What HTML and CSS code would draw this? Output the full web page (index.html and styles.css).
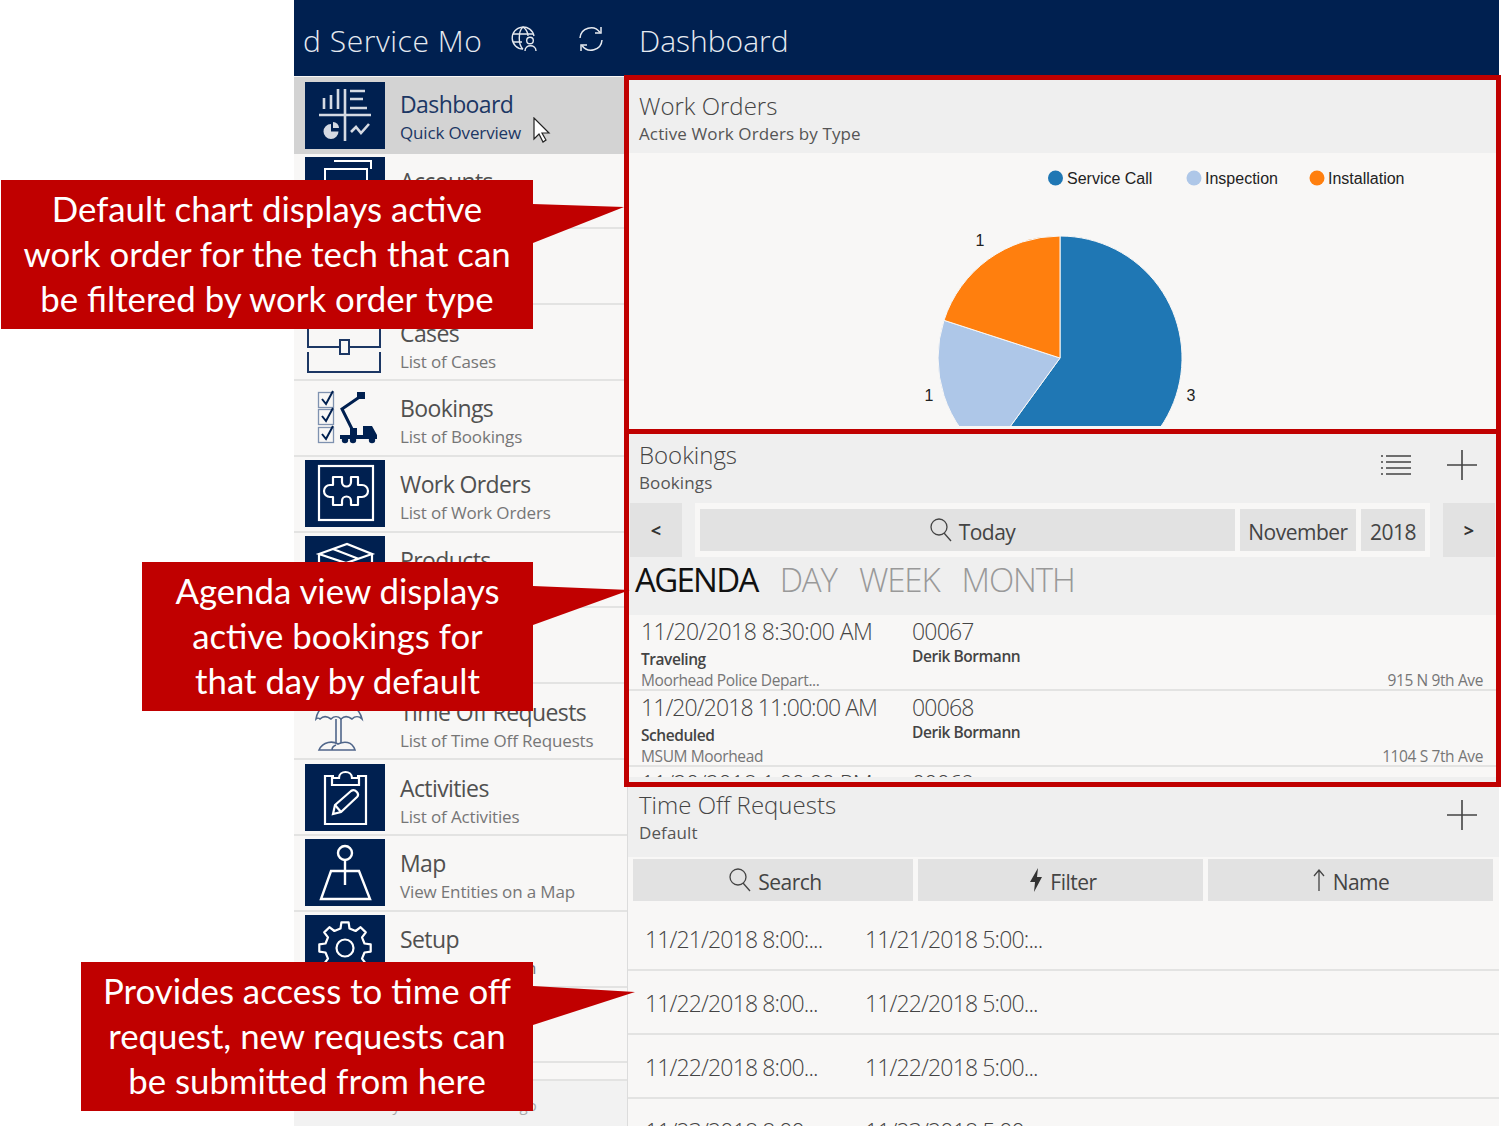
FILE: index.html
```html
<!DOCTYPE html>
<html lang="en">

<head>
    <meta charset="UTF-8">
    <meta name="viewport" content="width=device-width, initial-scale=1.0">
    <link rel="stylesheet" href="styles.css">
    <title>Field Service Mobile</title>
</head>

<body>

    <div class="app">

        <header class="topbar">
            <div class="app-name">d Service Mo</div>
            <svg class="top-icon globe" viewBox="0 0 28 28" fill="none" stroke="#e6eaf0" stroke-width="1.4">
                <path d="M13 24A11 11 0 1 1 24 11"/>
                <path d="M13 2C8 6 8 20 13 24M13 2C17 5 18 9 18 11"/>
                <path d="M3 9h20M3 17h9"/>
                <circle cx="20" cy="15.500" r="3.300"/>
                <path d="M15 26c0-7 11-7 11 0"/>
            </svg>
            <svg class="top-icon sync" viewBox="0 0 28 28" fill="none" stroke="#e6eaf0" stroke-width="1.5">
                <path d="M3 13A11 11 0 0 1 23 7.500"/>
                <path d="M24 2v6h-6"/>
                <path d="M25 15A11 11 0 0 1 5 20.500"/>
                <path d="M4 26v-6h6"/>
            </svg>
            <div class="page-title">Dashboard</div>
        </header>

        <div class="content">

            <nav class="sidebar">
                <a class="nav-row active">
                    <span class="tile">
                        <svg viewBox="0 0 80 67" fill="none" stroke="#d5dae3" stroke-width="2.600">
                            <path d="M14 33h52M40 7v52"/>
                            <path d="M19 27v-11M26 27v-14M33 27v-20"/>
                            <path d="M45 9h15M45 17h13M45 26h17"/>
                            <path d="M26 42a7.500 7.500 0 1 0 7.500 7.500h-7.500z" fill="#d5dae3" stroke="none"/>
                            <path d="M28 40a6 6 0 0 1 6 6h-6z" fill="#d5dae3" stroke="none"/>
                            <path d="M46 50l5-5 5 6 8-9"/>
                        </svg>
                    </span>
                    <span class="nav-text"><b>Dashboard</b><small>Quick Overview</small></span>
                </a>
                <a class="nav-row">
                    <span class="tile">
                        <svg viewBox="0 0 80 67" fill="none" stroke="#fff" stroke-width="2">
                            <path d="M20 12h42v42H20zM29 4h37v8"/>
                        </svg>
                    </span>
                    <span class="nav-text"><b>Accounts</b><small>List of Accounts</small></span>
                </a>
                <a class="nav-row">
                    <span class="tile"></span>
                    <span class="nav-text"><b>Contacts</b><small>List of Contacts</small></span>
                </a>
                <a class="nav-row">
                    <span class="tile plain">
                        <svg viewBox="0 0 80 67" fill="none" stroke="#1c3764" stroke-width="2">
                            <path d="M3 5v33h32M44 38h31V5"/>
                            <path d="M3 43v20h72V43"/>
                            <rect x="35" y="31" width="9" height="14"/>
                        </svg>
                    </span>
                    <span class="nav-text"><b>Cases</b><small>List of Cases</small></span>
                </a>
                <a class="nav-row">
                    <span class="tile plain">
                        <svg viewBox="0 0 80 67" fill="none" stroke="#002050" stroke-width="2">
                            <g stroke="#7f92b0" stroke-width="1.300">
                                <rect x="13.500" y="8.500" width="15" height="15"/>
                                <rect x="13.500" y="25.500" width="15" height="15"/>
                                <rect x="13.500" y="43.500" width="15" height="15"/>
                            </g>
                            <path d="M17 15l4 5 7-13M17 32l4 5 7-13M17 50l4 5 7-13"/>
                            <path d="M56 12L37 25l11 22" stroke-width="3"/>
                            <path d="M52 8h8v7h-8z" fill="#002050" stroke="none"/>
                            <path d="M45 44h7v8h-7zM35 51h23v-9h9l5 9v4H35z" fill="#002050" stroke="none"/>
                            <circle cx="40" cy="56" r="3.200" fill="#002050" stroke="none"/>
                            <circle cx="48" cy="56" r="3.200" fill="#002050" stroke="none"/>
                            <circle cx="67" cy="56" r="3.200" fill="#002050" stroke="none"/>
                        </svg>
                    </span>
                    <span class="nav-text"><b>Bookings</b><small>List of Bookings</small></span>
                </a>
                <a class="nav-row">
                    <span class="tile">
                        <svg viewBox="0 0 80 67" fill="none" stroke="#fff" stroke-width="2.200">
                            <rect x="14" y="6" width="54" height="54"/>
                            <path d="M28 17h9v5a4.500 4.500 0 0 0 9 0v-5h7v8h4a6 6 0 0 1 0 12h-4v8h-7v-4a4.500 4.500 0 0 0-9 0v4h-9v-8h-3a6 6 0 0 1 0-12h3z" stroke-linejoin="round"/>
                        </svg>
                    </span>
                    <span class="nav-text"><b>Work Orders</b><small>List of Work Orders</small></span>
                </a>
                <a class="nav-row">
                    <span class="tile">
                        <svg viewBox="0 0 80 67" fill="none" stroke="#fff" stroke-width="2.200">
                            <path d="M14 18L42 8l25 10-26 9zM14 18v28l27 12 26-12V18M41 27v31M28 13l26 10"/>
                        </svg>
                    </span>
                    <span class="nav-text"><b>Products</b><small>List of Products</small></span>
                </a>
                <a class="nav-row">
                    <span class="tile"></span>
                    <span class="nav-text"><b>Assets</b><small>List of Assets</small></span>
                </a>
                <a class="nav-row">
                    <span class="tile plain">
                        <svg viewBox="0 0 80 67" fill="none" stroke="#50668a" stroke-width="1.600">
                            <path d="M11 31C14 8 52 8 57 31c-3-3-7-3-10 0-4-3-8-3-11 0-3-3-7-3-10 0-4-3-8-3-11 0-1-1-3-1-4 0z"/>
                            <path d="M31 31v24M36 31v24"/>
                            <path d="M14 62c4-9 14-9 19-6 6-3 14-3 17 6zM27 62c0-2 1-4 4-5"/>
                        </svg>
                    </span>
                    <span class="nav-text"><b>Time Off Requests</b><small>List of Time Off Requests</small></span>
                </a>
                <a class="nav-row">
                    <span class="tile">
                        <svg viewBox="0 0 80 67" fill="none" stroke="#fff" stroke-width="2.200">
                            <path d="M29 12H20v48h41V12h-9"/>
                            <path d="M27 21v-7h7c0-8 13-8 13 0h7v7z"/>
                            <path d="M28 50l2-9 16-14c4-3 9 3 6 6L36 48z"/>
                            <path d="M30 41l6 7"/>
                        </svg>
                    </span>
                    <span class="nav-text"><b>Activities</b><small>List of Activities</small></span>
                </a>
                <a class="nav-row">
                    <span class="tile">
                        <svg viewBox="0 0 80 67" fill="none" stroke="#fff" stroke-width="2.400">
                            <circle cx="40" cy="14" r="7"/>
                            <path d="M40 21v25"/>
                            <path d="M26 32h28l11 28H16z"/>
                        </svg>
                    </span>
                    <span class="nav-text"><b>Map</b><small>View Entities on a Map</small></span>
                </a>
                <a class="nav-row">
                    <span class="tile">
                        <svg viewBox="0 0 80 67" fill="none" stroke="#fff" stroke-width="2.200">
                            <g transform="translate(40 33)">
                                <polygon points="-3.600,-25.700 3.600,-25.700 4.500,-19.500 10.600,-17 15.600,-20.800 20.800,-15.600 17,-10.600 19.500,-4.500 25.700,-3.600 25.700,3.600 19.500,4.500 17,10.600 20.800,15.600 15.600,20.800 10.600,17 4.500,19.500 3.600,25.700 -3.600,25.700 -4.500,19.500 -10.600,17 -15.600,20.800 -20.800,15.600 -17,10.600 -19.500,4.500 -25.700,3.600 -25.700,-3.600 -19.500,-4.500 -17,-10.600 -20.800,-15.600 -15.600,-20.800 -10.600,-17 -4.500,-19.500" stroke-linejoin="round"/>
                                <circle r="8.500"/>
                            </g>
                        </svg>
                    </span>
                    <span class="nav-text"><b>Setup</b><small>Setup Application</small></span>
                </a>
                <a class="nav-row"></a>
                <div class="nav-row short"></div>
                <div class="sync-note">Synced 5 minutes ago</div>
            </nav>

            <main class="main">

                <section class="panel work-orders">
                    <div class="panel-head">
                        <div>
                            <h2>Work Orders</h2>
                            <p>Active Work Orders by Type</p>
                        </div>
                    </div>
                    <svg class="chart" viewBox="628 153 871 277" width="871" height="277">
                        <circle cx="1055.500" cy="178" r="7.500" fill="#1f77b4"/>
                        <text x="1067" y="184" class="legend-label">Service Call</text>
                        <circle cx="1194" cy="178" r="7.500" fill="#aec7e8"/>
                        <text x="1205" y="184" class="legend-label">Inspection</text>
                        <circle cx="1317" cy="178" r="7.500" fill="#ff7f0e"/>
                        <text x="1328" y="184" class="legend-label">Installation</text>
                        <g stroke="#f8f7f6" stroke-width="1">
                            <path d="M1060 358V236A122 122 0 1 1 988.300 456.700z" fill="#1f77b4"/>
                            <path d="M1060 358L988.300 456.700A122 122 0 0 1 944 320.300z" fill="#aec7e8"/>
                            <path d="M1060 358L944 320.300A122 122 0 0 1 1060 236z" fill="#ff7f0e"/>
                        </g>
                        <rect x="628" y="426" width="871" height="4" fill="#f8f7f6"/>
                        <text x="980" y="246" class="pie-label" text-anchor="middle">1</text>
                        <text x="929" y="401" class="pie-label" text-anchor="middle">1</text>
                        <text x="1191" y="401" class="pie-label" text-anchor="middle">3</text>
                    </svg>
                </section>

                <section class="panel bookings">
                    <div class="panel-head">
                        <div>
                            <h2>Bookings</h2>
                            <p>Bookings</p>
                        </div>
                        <svg class="head-icon list-icon" viewBox="0 0 30 24" fill="none" stroke="#444" stroke-width="1.400">
                            <path d="M5 3h25M5 9h25M5 15h25M5 21h25"/>
                            <path d="M0 3h2M0 9h2M0 15h2M0 21h2"/>
                        </svg>
                        <svg class="head-icon plus-icon" viewBox="0 0 30 30" stroke="#444" stroke-width="1.600">
                            <path d="M15 0v30M0 15h30"/>
                        </svg>
                    </div>
                    <div class="cal-bar">
                        <button class="cal-arrow">&lt;</button>
                        <div class="cal-group">
                            <button class="btn today">
                                <svg class="btn-icon" viewBox="0 0 22 24" fill="none" stroke="#444" stroke-width="1.300">
                                    <circle cx="9" cy="9" r="8"/><path d="M14 15l7 8"/>
                                </svg>
                                Today
                            </button>
                            <button class="btn month">November</button>
                            <button class="btn year">2018</button>
                        </div>
                        <button class="cal-arrow">&gt;</button>
                    </div>
                    <div class="view-tabs">
                        <span class="current">AGENDA</span>
                        <span>DAY</span>
                        <span>WEEK</span>
                        <span>MONTH</span>
                    </div>
                    <div class="agenda">
                        <div class="agenda-row">
                            <div class="when">11/20/2018 8:30:00 AM</div>
                            <div class="num">00067</div>
                            <div class="status">Traveling</div>
                            <div class="tech">Derik Bormann</div>
                            <div class="place">Moorhead Police Depart...</div>
                            <div class="addr">915 N 9th Ave</div>
                        </div>
                        <div class="agenda-row">
                            <div class="when tight">11/20/2018 11:00:00 AM</div>
                            <div class="num">00068</div>
                            <div class="status">Scheduled</div>
                            <div class="tech">Derik Bormann</div>
                            <div class="place">MSUM Moorhead</div>
                            <div class="addr">1104 S 7th Ave</div>
                        </div>
                        <div class="agenda-row">
                            <div class="when">11/20/2018 1:00:00 PM</div>
                            <div class="num">00069</div>
                        </div>
                    </div>
                </section>

                <section class="panel time-off">
                    <div class="panel-head">
                        <div>
                            <h2>Time Off Requests</h2>
                            <p>Default</p>
                        </div>
                        <svg class="head-icon plus-icon" viewBox="0 0 30 30" stroke="#444" stroke-width="1.600">
                            <path d="M15 0v30M0 15h30"/>
                        </svg>
                    </div>
                    <div class="list-tools">
                        <button class="btn">
                            <svg class="btn-icon" viewBox="0 0 22 24" fill="none" stroke="#444" stroke-width="1.300">
                                <circle cx="9" cy="9" r="8"/><path d="M14 15l7 8"/>
                            </svg>
                            Search
                        </button>
                        <button class="btn">
                            <svg class="btn-icon bolt" viewBox="0 0 14 24" fill="#333">
                                <path d="M9 0L1 14h5l-1 10 8-15H8z"/>
                            </svg>
                            Filter
                        </button>
                        <button class="btn">
                            <svg class="btn-icon arrow" viewBox="0 0 14 24" fill="none" stroke="#444" stroke-width="1.300">
                                <path d="M7 23V2M2 8l5-6 5 6"/>
                            </svg>
                            Name
                        </button>
                    </div>
                    <div class="request-row"><span>11/21/2018 8:00:...</span><span>11/21/2018 5:00:...</span></div>
                    <div class="request-row"><span>11/22/2018 8:00...</span><span>11/22/2018 5:00...</span></div>
                    <div class="request-row"><span>11/22/2018 8:00...</span><span>11/22/2018 5:00...</span></div>
                    <div class="request-row"><span>11/23/2018 8:00...</span><span>11/23/2018 5:00...</span></div>
                </section>

            </main>
        </div>
    </div>

    <!-- overlays from the slide -->
    <div class="frame frame-one"></div>
    <div class="frame frame-two"></div>

    <svg class="cursor" viewBox="0 0 18 26">
        <path d="M1 1v21l5-5 4 8 3-2-4-7h7z" fill="#fff" stroke="#222" stroke-width="1.200"/>
    </svg>

    <div class="callout callout-one">
        Default chart displays active<br>work order for the tech that can<br>be filtered by work order type
        <svg class="tail" viewBox="0 0 91 149" width="91" height="149"><polygon points="0,24 91,27 0,63"/></svg>
    </div>
    <div class="callout callout-two">
        Agenda view displays<br>active bookings for<br>that day by default
        <svg class="tail" viewBox="0 0 97 149" width="97" height="149"><polygon points="0,24 97,28 0,63"/></svg>
    </div>
    <div class="callout callout-three">
        Provides access to time off<br>request, new requests can<br>be submitted from here
        <svg class="tail" viewBox="0 0 102 149" width="102" height="149"><polygon points="0,24 102,30 0,63"/></svg>
    </div>

</body>

</html>
```

FILE: styles.css
```css
* {
    box-sizing: border-box;
    margin: 0;
    padding: 0;
}

html {
    font-family: "Open Sans", "Noto Sans", sans-serif;
}

body {
    width: 1501px;
    height: 1126px;
    position: relative;
    overflow: hidden;
    background: #fff;
    color: #444;
}

.app {
    width: 1205px;
    height: 1126px;
    margin-left: 294px;
    display: flex;
    flex-direction: column;
    background: #f8f7f6;
}

/* top bar */

.topbar {
    height: 76px;
    flex: none;
    display: flex;
    align-items: center;
    padding-top: 4px;
    background: #002050;
    color: #e6eaf0;
    font-weight: 300;
    font-size: 30px;
}

.app-name {
    width: 179px;
    margin-left: 9px;
    letter-spacing: .55px;
    white-space: nowrap;
}

.top-icon {
    width: 28px;
    height: 28px;
    flex: none;
    margin-top: -3px;
}

.globe {
    margin-left: 28px;
}

.sync {
    margin-left: 39px;
}

.page-title {
    margin-left: 34px;
}

.content {
    flex: 1;
    display: flex;
    min-height: 0;
}

/* side menu */

.sidebar {
    width: 334px;
    flex: none;
    padding-top: 1px;
    border-right: 1px solid #dcdcdc;
    display: flex;
    flex-direction: column;
}

.nav-row {
    height: 75.83px;
    flex: none;
    display: flex;
    align-items: center;
    gap: 15px;
    padding-left: 11px;
    border-bottom: 2px solid #e3e3e2;
}

.nav-row.active {
    background: #d3d3d3;
    border-bottom: 0;
    height: 76.500px;
}

.nav-row.short {
    height: 18px;
}

.tile {
    width: 80px;
    height: 67px;
    flex: none;
    display: block;
    background: #002050;
}

.tile.plain {
    background: none;
}

.tile svg {
    display: block;
    width: 80px;
    height: 67px;
}

.nav-text {
    display: flex;
    flex-direction: column;
    padding-top: 8px;
    white-space: nowrap;
}

.active .nav-text {
    padding-top: 4px;
}

.nav-text b {
    font-weight: 400;
    font-size: 23px;
    line-height: 30px;
    letter-spacing: -.6px;
    color: #505050;
}

.nav-text small {
    font-size: 17px;
    line-height: 27px;
    letter-spacing: -.15px;
    color: #767676;
}

.active .nav-text b,
.active .nav-text small {
    color: #1c3764;
}

.sync-note {
    flex: 1;
    background: #f2f2f2;
    text-align: center;
    font-size: 15px;
    color: #aaa;
    padding-top: 14px;
}

/* right hand panels */

.main {
    flex: 1;
    min-width: 0;
    display: flex;
    flex-direction: column;
}

.panel {
    overflow: hidden;
    flex: none;
}

.panel-head {
    display: flex;
    align-items: flex-start;
    padding-left: 11px;
    background: #efefef;
}

.panel-head > div {
    flex: 1;
}

.panel-head h2 {
    font-weight: 300;
    font-size: 24px;
    line-height: 30px;
    color: #444;
}

.panel-head p {
    font-size: 17px;
    line-height: 26px;
    letter-spacing: .12px;
    color: #555;
}

.work-orders {
    height: 354px;
}

.work-orders .panel-head {
    height: 77px;
    padding-top: 15px;
}

.chart {
    display: block;
}

.legend-label {
    font-family: "Liberation Sans", sans-serif;
    font-size: 16px;
    fill: #222;
}

.pie-label {
    font-family: "Liberation Sans", sans-serif;
    font-size: 16px;
    fill: #222;
}

.bookings {
    height: 357px;
    background: #efefef;
}

.bookings .panel-head {
    height: 73px;
    padding-top: 10px;
}

.head-icon {
    flex: none;
    display: block;
}

.list-icon {
    width: 30px;
    height: 24px;
    margin-top: 13px;
    margin-right: 36px;
}

.plus-icon {
    width: 30px;
    height: 30px;
    margin-top: 10px;
    margin-right: 22px;
}

.btn {
    font-family: inherit;
    font-size: 21px;
    letter-spacing: -.5px;
    font-weight: 400;
    color: #444;
    background: #e2e2e2;
    border: none;
    padding-top: 3px;
    display: flex;
    align-items: center;
    justify-content: center;
    gap: 7px;
}

.btn-icon {
    width: 22px;
    height: 24px;
    flex: none;
    margin-top: -4px;
}

.btn-icon.bolt,
.btn-icon.arrow {
    width: 14px;
}

.cal-bar {
    height: 54px;
    display: flex;
    justify-content: space-between;
    padding: 0 4px 0 2px;
}

.cal-arrow {
    width: 52px;
    background: #e2e2e2;
    border: none;
    font-family: inherit;
    font-size: 18px;
    font-weight: 700;
    color: #333;
}

.cal-group {
    width: 735px;
    padding: 6px 5px;
    background: #f8f7f6;
    display: flex;
    gap: 5px;
}

.today {
    flex: 1;
    padding-left: 10px;
}

.month {
    width: 116px;
}

.year {
    width: 64px;
}

.view-tabs {
    height: 58px;
    padding-left: 7px;
    display: flex;
    gap: 22px;
    font-size: 33px;
    line-height: 46px;
    letter-spacing: -1.100px;
    font-weight: 300;
    color: #999;
}

.view-tabs .current {
    color: #111;
    font-weight: 400;
    letter-spacing: -1.700px;
}

.agenda {
    height: 162px;
    overflow: hidden;
    background: #f8f7f6;
}

.agenda-row {
    height: 76px;
    padding-left: 13px;
    padding-right: 16px;
    display: grid;
    grid-template-columns: 271px 1fr;
    grid-template-rows: 33px 22px 20px;
    border-bottom: 2px solid #e3e3e2;
}

.when,
.num {
    font-size: 23px;
    line-height: 33px;
    font-weight: 300;
    letter-spacing: -.55px;
    color: #444;
    white-space: nowrap;
}

.when.tight {
    letter-spacing: -.91px;
}

.num {
    letter-spacing: -.8px;
}

.status,
.tech {
    font-size: 15.500px;
    line-height: 22px;
    font-weight: 600;
    letter-spacing: -.45px;
    color: #444;
}

.tech {
    margin-top: -3px;
}

.place,
.addr {
    font-size: 15.500px;
    line-height: 20px;
    letter-spacing: -.38px;
    color: #767676;
}

.addr {
    text-align: right;
}

.time-off .panel-head {
    height: 70px;
    padding-top: 3px;
}

.list-tools {
    padding: 2px 6px 6px 5px;
    display: grid;
    grid-template-columns: 280px 285px 285px;
    gap: 5px;
}

.list-tools .btn {
    height: 42px;
}

.list-tools .btn:not(:last-child) {
    padding-left: 5px;
}

.request-row {
    height: 64px;
    padding-top: 17px;
    padding-left: 17px;
    display: grid;
    grid-template-columns: 220px 1fr;
    font-size: 23px;
    line-height: 30px;
    font-weight: 300;
    letter-spacing: -.85px;
    color: #444;
    border-bottom: 2px solid #e3e3e2;
}

/* overlays from the slide */

.frame {
    position: absolute;
    left: 624px;
    width: 877px;
    border: 5px solid #c00000;
}

.frame-one {
    top: 75px;
    height: 359px;
}

.frame-two {
    top: 429px;
    height: 358px;
}

.cursor {
    position: absolute;
    left: 533px;
    top: 117px;
    width: 18px;
    height: 26px;
}

.callout {
    position: absolute;
    height: 149px;
    padding-top: 6px;
    background: #c00000;
    color: #fff;
    font-family: Lato, "Open Sans", sans-serif;
    font-size: 34.800px;
    line-height: 45px;
    text-align: center;
    white-space: nowrap;
}

.callout-one {
    left: 1px;
    top: 180px;
    width: 532px;
}

.callout-two {
    left: 142px;
    top: 562px;
    width: 391px;
}

.callout-three {
    left: 81px;
    top: 962px;
    width: 452px;
}

.tail {
    position: absolute;
    left: 100%;
    top: 0;
    fill: #c00000;
}
```
